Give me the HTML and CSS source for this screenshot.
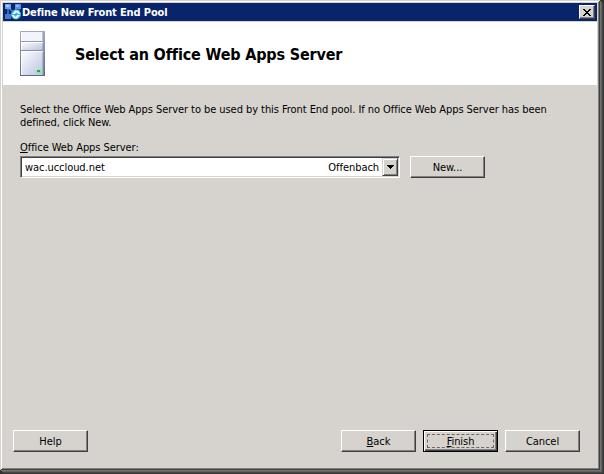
FILE: index.html
```html
<!DOCTYPE html>
<html lang="en">
<head>
    <meta charset="UTF-8">
    <meta name="viewport" content="width=device-width, initial-scale=1.0">
    <title>Define New Front End Pool</title>
    <link rel="stylesheet" href="styles.css">
</head>
<body>
    <div class="window">
        <div class="titlebar">
            <svg class="app-icon" width="16" height="18" viewBox="0 0 16 18">
                <path d="M3 4V14M3 4L13 14M13 4L4 14M14 3V9" stroke="#4a7fd0" stroke-width="1.5" fill="none"/>
                <rect x="0" y="1" width="6" height="5" fill="#6f9fe8"/>
                <rect x="10" y="1" width="6" height="5" fill="#5b8ee0"/>
                <rect x="0" y="11" width="6" height="5" fill="#4478cc"/>
                <rect x="1" y="2" width="3" height="2" fill="#a4c8f8"/>
                <rect x="11" y="2" width="3" height="2" fill="#8cb6f4"/>
                <circle cx="11" cy="11.5" r="5" fill="#38b0dc"/>
                <path d="M7 11L10 7.500H13L15.500 11H13L12 9.500H11L10 11zM6.500 12H9L10 13.500H11L12 12H15L12 15.500H9z" fill="#e8fbff"/>
            </svg>
            <span class="title">Define New Front End Pool</span>
            <button class="close" aria-label="Close">
                <svg width="8" height="7" viewBox="0 0 8 7" shape-rendering="crispEdges">
                    <path d="M0 0h2v1h1v1h2v-1h1v-1h2v1h-1v1h-1v1h-1v1h1v1h1v1h1v1h-2v-1h-1v-1h-2v1h-1v1h-2v-1h1v-1h1v-1h1v-1h-1v-1h-1v-1h-1z" fill="#000"/>
                </svg>
            </button>
        </div>

        <div class="header">
            <svg class="server" width="25" height="45" viewBox="0 0 25 45">
                <defs>
                    <linearGradient id="face" x1="0" y1="0" x2="1" y2="1">
                        <stop offset="0" stop-color="#fff"/>
                        <stop offset="1" stop-color="#b9c3e2"/>
                    </linearGradient>
                    <linearGradient id="edge" x1="0" y1="0" x2="0" y2="1">
                        <stop offset="0" stop-color="#a8abb5"/>
                        <stop offset="1" stop-color="#5f6886"/>
                    </linearGradient>
                </defs>
                <rect width="25" height="45" fill="url(#edge)"/>
                <rect x="1" y="1" width="22" height="9" fill="#f2f4fc"/>
                <rect x="1" y="11" width="22" height="8" fill="url(#face)"/>
                <rect x="1" y="20" width="22" height="24" fill="url(#face)"/>
                <path d="M23 1V44" stroke="#8d98bb"/>
                <path d="M1.500 1V10M1.500 11V19M1.500 20V44M1 11.500H23M1 20.500H23" stroke="#fff"/>
                <rect x="17" y="39" width="4" height="3" fill="#8be08e"/>
                <rect x="17" y="39" width="3" height="2" fill="#00c80a"/>
            </svg>
            <h1>Select an Office Web Apps Server</h1>
        </div>

        <div class="content">
            <p class="intro">Select the Office Web Apps Server to be used by this Front End pool. If no Office Web Apps Server has been<br>defined, click New.</p>
            <div class="label"><u>O</u>ffice Web Apps Server:</div>
            <div class="row">
                <div class="combo">
                    <span>wac.uccloud.net</span>
                    <span class="site">Offenbach</span>
                    <button class="drop" aria-label="Open list">
                        <svg width="7" height="4" viewBox="0 0 7 4" shape-rendering="crispEdges"><path d="M0 0h7v1h-1v1h-1v1h-1v1h-1v-1h-1v-1h-1v-1h-1z" fill="#000"/></svg>
                    </button>
                </div>
                <button class="btn">New...</button>
            </div>
        </div>

        <div class="footer">
            <button class="btn help">Help</button>
            <button class="btn"><u>B</u>ack</button>
            <button class="btn default"><span class="focus"><u>F</u>inish</span></button>
            <button class="btn">Cancel</button>
        </div>
    </div>
</body>
</html>
```

FILE: styles.css
```css
/* Global Styles */
* {
    box-sizing: border-box;
}

body {
    margin: 0;
    width: 604px;
    height: 474px;
    overflow: hidden;
    background-color: #333;
    font-family: 'DejaVu Sans Condensed', 'DejaVu Sans', sans-serif;
    font-stretch: condensed;
    font-size: 11px;
    letter-spacing: -0.06px;
    color: #000;
}

button {
    font: inherit;
    letter-spacing: inherit;
    color: inherit;
    padding: 0;
    background-color: #d6d3ce;
}

u {
    text-decoration: underline;
    text-decoration-thickness: 1px;
    text-underline-offset: 1px;
    text-decoration-skip-ink: none;
}

/* Window frame */
.window {
    display: flex;
    flex-direction: column;
    width: 600px;
    height: 470px;
    padding: 3px;
    background-color: #d6d3ce;
    box-shadow: inset 1px 1px #d6d3ce, inset -1px -1px #404040, inset 2px 2px #fff, inset -2px -2px #808080, 1px 1px #737373, 2px 2px #606060, 3px 3px #484848;
}

.titlebar {
    display: flex;
    align-items: center;
    height: 18px;
    padding: 0 2px;
    background-color: #08246b;
    color: #fff;
}

.app-icon {
    flex: none;
}

.title {
    flex: 1;
    margin-left: 1px;
    padding-top: 1px;
    font-weight: bold;
    letter-spacing: -0.14px;
    line-height: 18px;
    white-space: nowrap;
}

.close {
    display: flex;
    align-items: center;
    justify-content: center;
    width: 16px;
    height: 14px;
    border: 1px solid;
    border-color: #fff #404040 #404040 #fff;
    box-shadow: inset -1px -1px #808080;
}

/* Header */
.header {
    display: flex;
    height: 63px;
    margin-top: 1px;
    padding: 9px 17px;
    background-color: #fff;
}

h1 {
    margin: 12px 0 0 30px;
    font-size: 16px;
    letter-spacing: -0.16px;
    line-height: 24px;
    white-space: nowrap;
}

/* Content */
.content {
    flex: 1;
    padding: 18px 17px 0;
}

.intro {
    margin: 0;
    line-height: 13px;
    white-space: nowrap;
}

.label {
    margin-top: 12px;
    line-height: 13px;
}

.row {
    display: flex;
    gap: 10px;
    margin-top: 2px;
}

.combo {
    display: flex;
    align-items: center;
    width: 380px;
    height: 22px;
    padding-left: 4px;
    background-color: #fff;
    border: 1px solid;
    border-color: #808080 #fff #fff #808080;
    box-shadow: inset 1px 1px #404040, inset -1px -1px #d6d3ce;
}

.combo span {
    padding-top: 1px;
}

.site {
    margin-left: auto;
}

.drop {
    display: flex;
    align-items: center;
    justify-content: center;
    width: 16px;
    height: 18px;
    margin: 0 1px 0 3px;
    border: 1px solid;
    border-color: #d6d3ce #404040 #404040 #d6d3ce;
    box-shadow: inset 1px 1px #fff, inset -1px -1px #808080;
}

/* Buttons */
.btn {
    width: 75px;
    height: 22px;
    padding-top: 1px;
    border: 1px solid;
    border-color: #fff #404040 #404040 #fff;
    box-shadow: inset -1px -1px #808080;
    line-height: 19px;
}

.default {
    padding: 3px;
    border-color: #000;
    box-shadow: inset 1px 1px #fff, inset -1px -1px #404040, inset -2px -2px #808080;
}

.focus {
    display: block;
    height: 14px;
    border: 1px dashed #6b6862;
    line-height: 14px;
}

.footer {
    display: flex;
    gap: 7px;
    padding: 0 17px 15px 10px;
}

.help {
    margin-right: auto;
}
```
